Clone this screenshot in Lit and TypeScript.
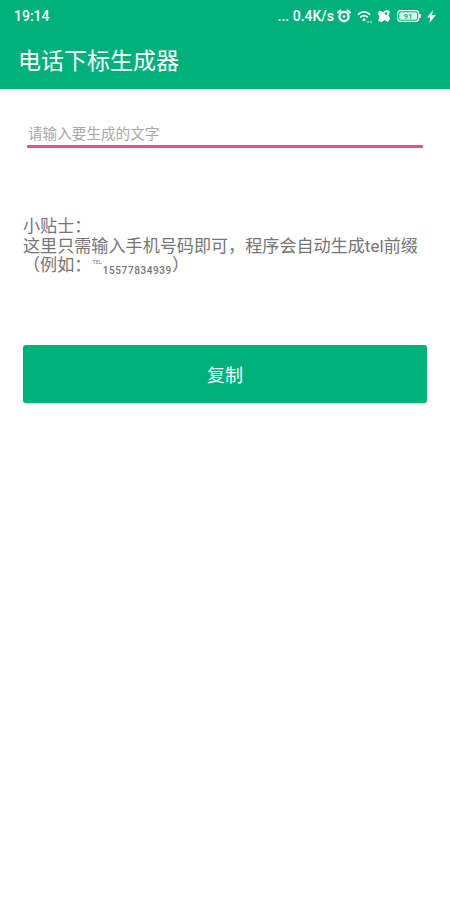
import { LitElement, html, css } from "lit";
import { customElement } from "lit/decorators.js";

@customElement("app-root")
export class AppRoot extends LitElement {
  static styles = css`
    :host {
      display: block;
      width: 450px;
      height: 900px;
      background: #fff;
      font-family: "Roboto", "Noto Sans CJK SC", sans-serif;
      overflow: hidden;
    }
    .status {
      height: 32px;
      background: #00b07c;
      color: #fff;
      display: flex;
      align-items: center;
      padding: 0 14px;
      font-size: 14px;
      font-weight: 500;
      box-sizing: border-box;
    }
    .spacer { flex: 1; }
    .right { display: flex; align-items: center; }
    .right svg { display: block; }
    .speed { margin-right: 3px; font-weight: 500; }
    .alarm { margin-right: 6px; }
    .wifi { margin-right: 5px; }
    .fan { margin-right: 6px; }
    .battery { margin-right: 6px; }
    .bar {
      height: 57px;
      background: #00b07c;
      color: #fff;
      display: flex;
      align-items: center;
      padding: 2px 18px 0;
      box-sizing: border-box;
      font-size: 23px;
      line-height: 30px;
    }
    .field { margin: 32px 27px 0 27px; }
    .placeholder {
      font-size: 14.6px;
      line-height: 24px;
      color: #a8a8a8;
      height: 24px;
      padding-left: 1px;
      transform: translateY(1px);
    }
    .line { height: 3px; background: #e0548c; border-radius: 1px; }
    .tip {
      margin: 69px 23px 0 23px;
      font-size: 17.1px;
      line-height: 19.5px;
      color: #757575;
      white-space: nowrap;
    }
    .tip .tel {
      font-size: 5.5px;
      vertical-align: 7px;
      margin: 0 1px 0 1px;
      line-height: 0;
    }
    .tip .num {
      font-size: 10px;
      font-weight: 500;
      letter-spacing: 0.6px;
      vertical-align: -3px;
      line-height: 0;
    }
    .btn {
      margin: 69px 23px 0 23px;
      height: 58px;
      background: #00b07c;
      color: #fff;
      border-radius: 3px;
      display: flex;
      align-items: center;
      justify-content: center;
      font-size: 18px;
      box-shadow: 0 1px 2px rgba(0, 0, 0, 0.15);
    }
  `;

  render() {
    return html`
      <div class="status">
        <span>19:14</span>
        <span class="spacer"></span>
        <div class="right">
          <span class="speed">... 0.4K/s</span>
          <svg class="alarm" width="14" height="14" viewBox="0 0 14 14">
            <circle cx="7" cy="7.5" r="4.6" fill="none" stroke="#fff" stroke-width="2.2"></circle>
            <circle cx="7" cy="7.5" r="1.3" fill="#fff"></circle>
            <path d="M1 3.6 L3.4 1.4 M13 3.6 L10.6 1.4" stroke="#fff" stroke-width="2" stroke-linecap="round"></path>
          </svg>
          <svg class="wifi" width="15" height="13" viewBox="0 0 15 13">
            <path d="M0.8 4.6 Q7 -0.8 13.2 4.6" fill="none" stroke="#fff" stroke-width="1.7"></path>
            <path d="M3.2 7.3 Q7 4 10.8 7.3" fill="none" stroke="#fff" stroke-width="1.7"></path>
            <circle cx="7" cy="9.8" r="1.5" fill="#fff"></circle>
            <circle cx="11" cy="12" r="0.8" fill="#fff"></circle>
            <circle cx="14" cy="12" r="0.8" fill="#fff"></circle>
          </svg>
          <svg class="fan" width="14" height="14" viewBox="0 0 14 14">
            <path d="M2 1.5 L6.5 3 L9 1 L13 2 L11.5 6 L13 9.5 L11 13 L7.5 11 L5 13 L1 12 L2.5 8 L1 5 Z" fill="#fff"></path>
            <circle cx="9" cy="4.6" r="1.3" fill="#00b07c"></circle>
          </svg>
          <svg class="battery" width="24" height="12" viewBox="0 0 24 12">
            <rect x="0.6" y="0.6" width="21" height="10.8" rx="3" fill="none" stroke="#fff" stroke-width="1.1"></rect>
            <rect x="2.2" y="2.2" width="17.8" height="7.6" rx="1.6" fill="#d8f5e8"></rect>
            <rect x="22.4" y="4" width="1.5" height="4" rx="0.7" fill="#fff"></rect>
            <text x="11" y="9" font-size="8" text-anchor="middle" fill="#00b07c" font-family="Roboto">91</text>
          </svg>
          <svg width="9" height="13" viewBox="0 0 9 13">
            <path d="M6 0 L0 7.6 H3.2 L2.4 13 L9 5 H5 Z" fill="#fff"></path>
          </svg>
        </div>
      </div>
      <div class="bar">电话下标生成器</div>
      <div class="field">
        <div class="placeholder">请输入要生成的文字</div>
        <div class="line"></div>
      </div>
      <div class="tip">
        小贴士：<br />这里只需输入手机号码即可，程序会自动生成tel前缀<br />（例如：<span class="tel">TEL</span><span class="num">15577834939</span>）
      </div>
      <div class="btn">复制</div>
    `;
  }
}
